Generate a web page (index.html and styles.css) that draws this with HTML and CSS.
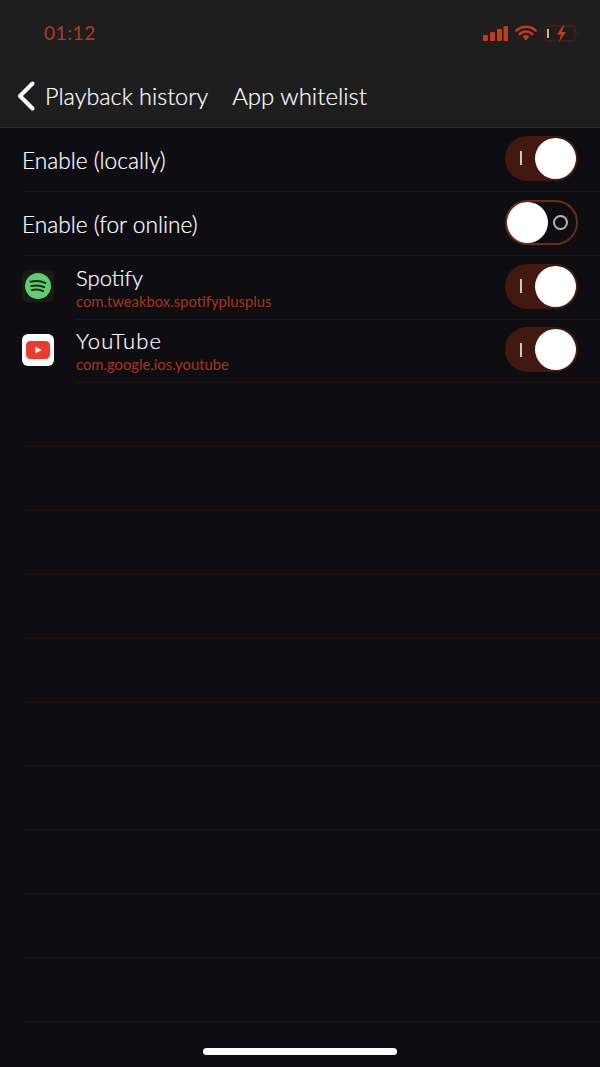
FILE: index.html
```html
<html>
<head>
<meta charset="utf-8">
<title>App whitelist</title>
<link rel="stylesheet" href="styles.css">
</head>
<body>
<div class="screen">
  <header class="top">
    <div class="statusbar">
      <span class="time">01:12</span>
      <div class="status-icons">
        <svg width="25" height="15" viewBox="0 0 25 15">
          <rect x="0" y="9" width="5" height="6" rx="1"/>
          <rect x="7" y="6" width="5" height="9" rx="1"/>
          <rect x="14" y="3" width="5" height="12" rx="1"/>
          <rect x="20.5" y="0" width="4.5" height="15" rx="1"/>
        </svg>
        <svg width="22" height="16" viewBox="0 0 22 16">
          <path d="M1.500 5.500a14 14 0 0 1 19 0M4.800 9a9 9 0 0 1 12.400 0" fill="none" stroke="#c43a1b" stroke-width="2.600" stroke-linecap="round"/>
          <path d="M7.500 11.500a5.400 5.400 0 0 1 7 0L11 15.500z"/>
        </svg>
        <svg width="35" height="17" viewBox="0 0 35 17">
          <rect x="1" y="1" width="30" height="15" rx="3.500" fill="none" stroke="#4a1e12" stroke-width="1.600"/>
          <rect x="3" y="4" width="2" height="9" fill="#d8b860"/>
          <path d="M33 6l2 2.500-2 2.500z" fill="#4a1e12"/>
          <path d="M19 .5l-6 9h4l-2 7.500 7-10h-4.300l2.800-6.500z"/>
        </svg>
      </div>
    </div>
    <nav class="navbar">
      <a class="back" href="#">
        <svg width="20" height="30" viewBox="0 0 20 30"><path d="M16.500 2.500L4 15l12.500 12.500" fill="none" stroke="#fff" stroke-width="4" stroke-linecap="round" stroke-linejoin="round"/></svg>
        <span class="back-label">Playback history</span>
      </a>
      <span class="nav-title">App whitelist</span>
    </nav>
  </header>

  <main class="list">
    <div class="row">
      <div class="row-body">
        <span class="label setting">Enable (locally)</span>
        <span class="switch on"><i class="mark"></i><b class="knob"></b></span>
      </div>
    </div>
    <div class="row">
      <div class="row-body">
        <span class="label setting">Enable (for online)</span>
        <span class="switch off"><b class="knob"></b><i class="mark"></i></span>
      </div>
    </div>
    <div class="row">
      <svg class="app-icon" width="32" height="32" viewBox="0 0 32 32">
        <rect width="32" height="32" rx="6" fill="#1a1a18"/>
        <circle cx="16" cy="16" r="13" fill="#5fcf6b"/>
        <path d="M8.500 11.800c5-1.300 10.500-1 15 1.300M9.300 16c4.300-1 9-.8 13 1.200M10 20c3.700-.8 7.500-.6 11 1" fill="none" stroke="#1a2a1c" stroke-width="2" stroke-linecap="round"/>
      </svg>
      <div class="row-body">
        <div class="app-text">
          <span class="label">Spotify</span>
          <span class="bundle">com.tweakbox.spotifyplusplus</span>
        </div>
        <span class="switch on"><i class="mark"></i><b class="knob"></b></span>
      </div>
    </div>
    <div class="row">
      <svg class="app-icon" width="32" height="32" viewBox="0 0 32 32">
        <rect width="32" height="32" rx="6" fill="#fff"/>
        <rect x="4" y="7" width="24" height="18" rx="4.500" fill="#ee3a2b"/>
        <path d="M13.500 12.500l6 3.500-6 3.500z" fill="#fff"/>
      </svg>
      <div class="row-body">
        <div class="app-text">
          <span class="label wide">YouTube</span>
          <span class="bundle">com.google.ios.youtube</span>
        </div>
        <span class="switch on"><i class="mark"></i><b class="knob"></b></span>
      </div>
    </div>
    <div class="row"><div class="row-body empty"></div></div>
    <div class="row"><div class="row-body empty"></div></div>
    <div class="row"><div class="row-body empty"></div></div>
    <div class="row"><div class="row-body empty"></div></div>
    <div class="row"><div class="row-body empty"></div></div>
    <div class="row"><div class="row-body empty"></div></div>
    <div class="row"><div class="row-body empty"></div></div>
    <div class="row"><div class="row-body empty"></div></div>
    <div class="row"><div class="row-body empty"></div></div>
    <div class="row"><div class="row-body empty"></div></div>
  </main>

  <div class="home-bar"></div>
</div>
</body>
</html>
```

FILE: styles.css
```css
html, body {
	margin:0;
	padding:0;
	background:#0e0e12;
}
.screen {
	position:relative;
	width:600px;
	height:1067px;
	overflow:hidden;
	background:#0e0e12;
	font-family:"Lato", "Liberation Sans", sans-serif;
	font-weight:300;
	color:#fff;
}
.top {
	height:127px;
	background:#1e1e1e;
	border-bottom:1px solid #2c2c2e;
}
.statusbar {
	display:flex;
	justify-content:space-between;
	align-items:center;
	height:66px;
	padding:0 21px 0 44px;
}
.time {
	font-size:19px;
	font-weight:400;
	letter-spacing:.6px;
	color:#b5371a;
	margin-top:-2px;
}
.status-icons {
	display:flex;
	align-items:center;
	gap:7px;
	fill:#c43a1b;
}
.navbar {
	display:flex;
	align-items:center;
	gap:24px;
	height:59px;
	padding-left:16px;
	font-size:24px;
	-webkit-text-stroke:.2px #fff;
}
.back {
	display:flex;
	align-items:center;
	gap:9px;
	color:#fff;
	text-decoration:none;
}
.back-label {
	font-size:23.4px;
}
.row {
	display:flex;
	align-items:flex-start;
	padding-left:22px;
	height:63.85px;
}
.row-body {
	flex:1;
	display:flex;
	justify-content:space-between;
	align-items:center;
	height:100%;
	box-sizing:border-box;
	padding-right:22px;
	border-bottom:1px solid #241210;
}
.label {
	font-size:22px;
	color:#fff;
	-webkit-text-stroke:.2px #fff;
}
.setting {
	font-size:22.7px;
	margin-top:3px;
}
.wide {
	letter-spacing:1.100px;
}
.app-icon {
	margin:14px 21px 0 0;
	flex:none;
}
.app-text {
	display:flex;
	flex-direction:column;
	gap:2px;
	padding-left:1px;
}
.app-text .label {
	line-height:26px;
}
.bundle {
	font-size:14.800px;
	font-weight:400;
	line-height:17px;
	color:#a8341a;
}
.switch {
	display:flex;
	align-items:center;
	justify-content:space-between;
	box-sizing:border-box;
	width:73px;
	height:45px;
	margin-bottom:2px;
	border-radius:23px;
}
.switch.on {
	background:#43190f;
	padding:0 2px 0 15px;
}
.switch.off {
	border:2px solid #6e2a15;
	padding:0 8px 0 0;
}
.knob {
	width:41px;
	height:41px;
	border-radius:50%;
	background:#fff;
}
.switch.on .mark {
	width:2px;
	height:14px;
	background:#cfc8c4;
}
.switch.off .mark {
	box-sizing:border-box;
	width:15px;
	height:15px;
	border:2px solid #b9b5b3;
	border-radius:50%;
}
.home-bar {
	position:absolute;
	left:203px;
	bottom:12px;
	width:194px;
	height:7px;
	border-radius:4px;
	background:#fff;
}
```
